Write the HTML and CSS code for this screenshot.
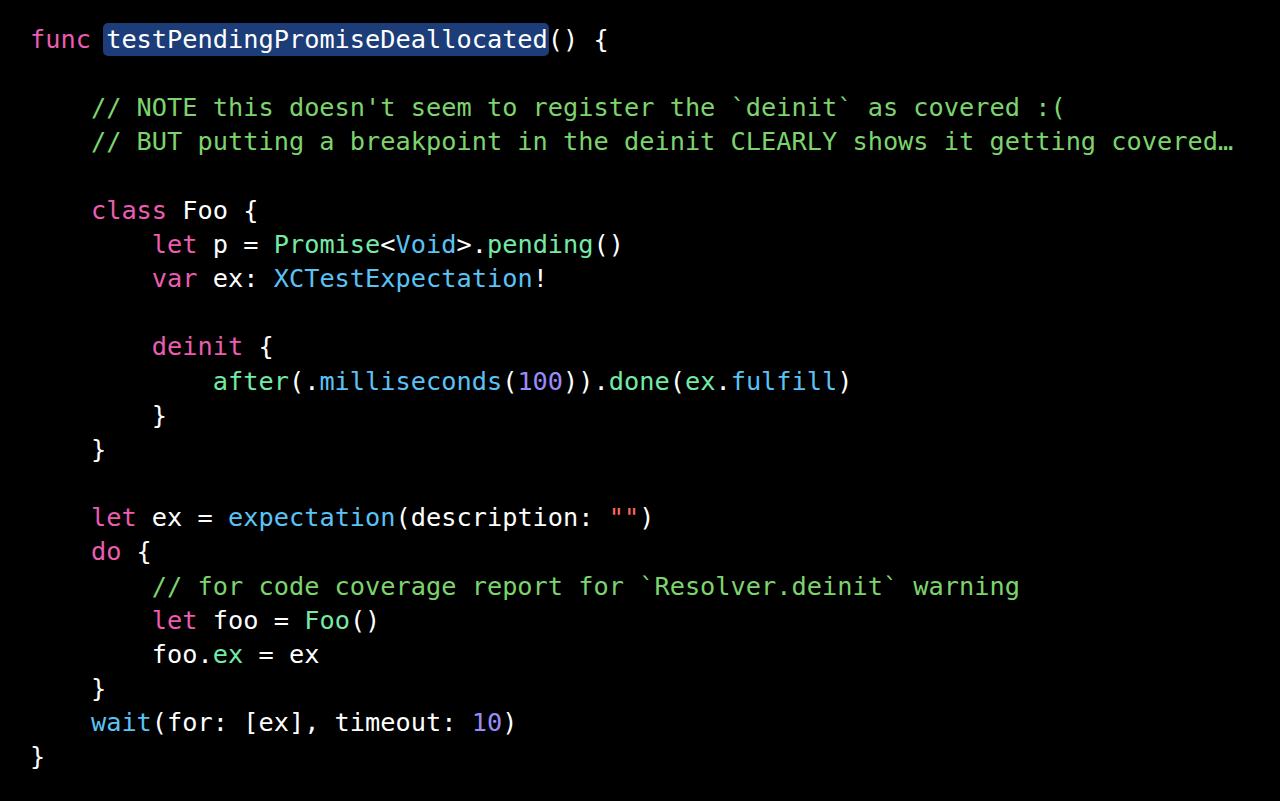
FILE: index.html
```html
<!DOCTYPE html>
<html>
<head>
<meta charset="utf-8">
<link rel="stylesheet" href="styles.css">
</head>
<body>
<pre class="code"><span class="kw">func</span> <span class="sel">testPendingPromiseDeallocated</span>() {

    <span class="cm">// NOTE this doesn't seem to register the `deinit` as covered :(</span>
    <span class="cm">// BUT putting a breakpoint in the deinit CLEARLY shows it getting covered…</span>

    <span class="kw">class</span> Foo {
        <span class="kw">let</span> p = <span class="pj">Promise</span>&lt;<span class="ty">Void</span>&gt;.<span class="pj">pending</span>()
        <span class="kw">var</span> ex: <span class="ty">XCTestExpectation</span>!

        <span class="kw">deinit</span> {
            <span class="pj">after</span>(.<span class="ty">milliseconds</span>(<span class="nm">100</span>)).<span class="pj">done</span>(<span class="pj">ex</span>.<span class="ty">fulfill</span>)
        }
    }

    <span class="kw">let</span> ex = <span class="ty">expectation</span>(description: <span class="st">""</span>)
    <span class="kw">do</span> {
        <span class="cm">// for code coverage report for `Resolver.deinit` warning</span>
        <span class="kw">let</span> foo = <span class="pj">Foo</span>()
        foo.<span class="pj">ex</span> = ex
    }
    <span class="ty">wait</span>(for: [ex], timeout: <span class="nm">10</span>)
}</pre>
</body>
</html>
```

FILE: styles.css
```css
html, body {
  margin: 0;
  padding: 0;
  background: #000000;
  height: 100%;
}
.code {
  margin: 0;
  padding: 23px 0 0 30px;
  font-family: "DejaVu Sans Mono", "Liberation Mono", monospace;
  font-size: 25.3px;
  line-height: 34.15px;
  color: #ffffff;
  white-space: pre;
}
.kw { color: #ea5db0; }
.cm { color: #7dd46e; }
.pj { color: #74eaa6; }
.ty { color: #5bc2f6; }
.nm { color: #9a8cf8; }
.st { color: #fc6a5d; }
.sel {
  background: #1c3d78;
  border-radius: 5px;
  padding: 2px 1px 2px 3px;
  margin-left: -3px;
  margin-right: -1px;
}
```
